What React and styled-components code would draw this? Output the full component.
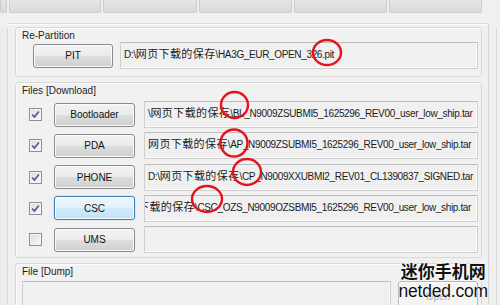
import styled, { createGlobalStyle, css } from "styled-components";

const GlobalStyle = createGlobalStyle`
  html, body { margin: 0; padding: 0; background: #f0f0f0; }
  body { font-family: "Liberation Sans", "Noto Sans CJK SC", sans-serif; }
`;

const Screen = styled.div`
  position: relative;
  width: 500px;
  height: 305px;
  overflow: hidden;
  display: flex;
  flex-direction: column;
  background: #f0f0f0;
  color: #1b1b1b;
  font-size: 10px;
`;

const TopBar = styled.div`
  display: flex;
  gap: 2px;
  height: 14px;
  flex: none;
`;

const TopCell = styled.div`
  width: ${(p) => p.$w}px;
  height: 13px;
  background: linear-gradient(#e6e6e6, #dadada);
  border: 1px solid #cdcdcd;
  border-top: none;
  border-radius: 0 0 2px 2px;
  box-sizing: border-box;
`;

const Body = styled.div`
  flex: 1;
  display: flex;
  min-height: 0;
`;

const LeftStrip = styled.div`
  width: 7px;
  flex: none;
  margin-top: 14px;
  border-right: 1px solid #d8d8d8;
  background: #ededed;
`;

const Page = styled.div`
  width: 481px;
  flex: none;
  margin-top: 9px;
  border-top: 1px solid #dcdcdc;
  border-right: 1px solid #d6d6d6;
  box-shadow: inset 0 1px 0 #fafafa;
  background: #f0f0f0;
  box-sizing: border-box;
  padding: 3px 6px 0 7px;
  display: flex;
  flex-direction: column;
  gap: 5px;
`;

const RightStrip = styled.div`
  flex: 1;
  margin-top: 14px;
  display: flex;
  justify-content: flex-end;
  padding-right: 3px;
  & > div {
    width: 1px;
    background: #d9d9d9;
  }
`;

const Group = styled.div`
  border: 1px solid #d9d9d9;
  border-radius: 3px;
  box-shadow: inset 1px 1px 0 #fbfbfb;
  background: #f1f1f1;
  padding: 2px 3px ${(p) => p.$pb}px 0;
  display: flex;
  flex-direction: column;
  flex: ${(p) => (p.$grow ? 1 : "none")};
`;

const GroupLabel = styled.div`
  padding-left: 6px;
  height: 12px;
  line-height: 12px;
  font-size: 10px;
  color: #1e1e1e;
`;

const Rows = styled.div`
  display: flex;
  flex-direction: column;
  gap: 4.25px;
  margin-top: ${(p) => p.$mt}px;
`;

const Row = styled.div`
  display: flex;
  align-items: center;
  height: 27px;
  padding-left: ${(p) => p.$pl}px;
  gap: ${(p) => p.$gap}px;
`;

const Check = styled.div`
  width: 13px;
  height: 13px;
  box-sizing: border-box;
  border: 1px solid #8f8f8f;
  background: linear-gradient(135deg, #dcdcdc, #f8f8f8);
  box-shadow: inset 0 0 0 1px #f4f4f4;
  display: flex;
  align-items: center;
  justify-content: center;
  margin-right: 12px;
  flex: none;
`;

const Button = styled.div`
  width: ${(p) => p.$w}px;
  height: ${(p) => p.$h || 24}px;
  flex: none;
  box-sizing: border-box;
  border: 1px solid #8a8a8a;
  border-radius: 3px;
  display: flex;
  align-items: center;
  justify-content: center;
  font-size: 10px;
  color: #111;
  box-shadow: inset 0 0 0 1px #fbfbfb;
  background: linear-gradient(#f3f3f3 0%, #ebebeb 48%, #dddddd 52%, #cfcfcf 100%);
  ${(p) =>
    p.$focus &&
    css`
      border-color: #3c7fb1;
      box-shadow: inset 0 0 0 1px #f7fcff, 0 0 2px #a8d6f2;
      background: linear-gradient(#eef7fd 0%, #e2f2fb 48%, #d0eaf9 52%, #c3e3f6 100%);
    `}
  ${(p) =>
    p.$disabled &&
    css`
      color: #a8a8a8;
      border-color: #b5b5b5;
      background: #f4f4f4;
    `}
`;

const Spacer = styled.div`
  width: ${(p) => p.$w}px;
  flex: none;
`;

const Field = styled.div`
  flex: 1;
  height: ${(p) => p.$h || 27}px;
  align-self: ${(p) => (p.$top ? "flex-start" : "center")};
  box-sizing: border-box;
  border: 1px solid #cfcfcf;
  border-top-color: #bdbdbd;
  box-shadow: inset -1px -1px 0 #fbfbfb;
  background: #f0f0f0;
  padding: 0 0 5px 3px;
  display: flex;
  align-items: center;
  overflow: hidden;
  white-space: nowrap;
  font-size: 10px;
  letter-spacing: -0.35px;
  color: #1c1c1c;
  min-width: 0;
`;

const FieldText = styled.span`
  display: block;
  margin-left: ${(p) => p.$shift || 0}px;
`;

const Cjk = styled.span`
  font-family: "Noto Sans CJK SC", sans-serif;
  font-size: 11px;
  letter-spacing: 0.4px;
`;

const DumpRow = styled.div`
  display: flex;
  gap: 7px;
  padding-left: 6px;
  margin-top: 3px;
  height: 30px;
`;

const Watermark = styled.div`
  position: absolute;
  right: 12px;
  bottom: 3px;
  display: flex;
  flex-direction: column;
  align-items: center;
  color: #111;
  text-shadow: 0 0 2px #fff, 0 0 2px #fff;
  pointer-events: none;
`;

const WmCn = styled.div`
  font-family: "Noto Sans CJK SC", sans-serif;
  font-size: 17px;
  font-weight: 700;
  line-height: 20px;
`;

const WmEn = styled.div`
  font-family: "Liberation Sans", sans-serif;
  font-size: 17.5px;
  line-height: 21px;
  letter-spacing: -0.2px;
`;

const Marks = styled.svg`
  position: absolute;
  left: 0;
  top: 0;
  pointer-events: none;
`;

const CheckMark = () => (
  <svg width="9" height="9" viewBox="0 0 9 9">
    <path d="M1.2 4.6 L3.5 7 L7.8 1.4" fill="none" stroke="#4b5f8f" strokeWidth="1.7" />
  </svg>
);

// CJK parts of a path get their own font size, as in the original control
const PathText = ({ text, shift }) => (
  <FieldText $shift={shift}>
    {text.split(/([\u4e00-\u9fff]+)/).map((part, i) =>
      /[\u4e00-\u9fff]/.test(part) ? <Cjk key={i}>{part}</Cjk> : part
    )}
  </FieldText>
);

const files = [
  { name: "Bootloader", checked: true, text: "\\网页下载的保存\\BL_N9009ZSUBMI5_1625296_REV00_user_low_ship.tar" },
  { name: "PDA", checked: true, text: "网页下载的保存\\AP_N9009ZSUBMI5_1625296_REV00_user_low_ship.tar" },
  { name: "PHONE", checked: true, text: "D:\\网页下载的保存\\CP_N9009XXUBMI2_REV01_CL1390837_SIGNED.tar" },
  { name: "CSC", checked: true, focus: true, shift: -10, text: "下载的保存\\CSC_OZS_N9009OZSBMI5_1625296_REV00_user_low_ship.tar" },
  { name: "UMS", checked: false, text: "" },
];

const circles = [
  { cx: 327, cy: 52.5, rx: 14, ry: 12.5 },
  { cx: 234.5, cy: 105, rx: 13.5, ry: 13 },
  { cx: 234, cy: 143, rx: 13.5, ry: 13.5 },
  { cx: 247, cy: 172, rx: 14, ry: 13 },
  { cx: 207, cy: 199, rx: 15, ry: 13 },
];

const topCells = [7, 92, 94, 93, 93, 93];

const App = () => {
  return (
    <Screen>
      <GlobalStyle />
      <TopBar>
        {topCells.map((w, i) => (
          <TopCell key={i} $w={w} />
        ))}
      </TopBar>
      <Body>
        <LeftStrip />
        <Page>
          <Group $pb={7}>
            <GroupLabel>Re-Partition</GroupLabel>
            <Rows $mt={0}>
              <Row $pl={17} $gap={7}>
                <Button $w={80}>PIT</Button>
                <Field>
                  <PathText text="D:\网页下载的保存\HA3G_EUR_OPEN_326.pit" />
                </Field>
              </Row>
            </Rows>
          </Group>
          <Group $pb={4}>
            <GroupLabel>Files [Download]</GroupLabel>
            <Rows $mt={4}>
              {files.map((f) => (
                <Row key={f.name} $pl={13} $gap={0}>
                  <Check>{f.checked && <CheckMark />}</Check>
                  <Button $w={81} $focus={f.focus}>{f.name}</Button>
                  <Spacer $w={9} />
                  <Field>
                    <PathText text={f.text} shift={f.shift} />
                  </Field>
                </Row>
              ))}
            </Rows>
          </Group>
          <Group $pb={0} $grow>
            <GroupLabel>File [Dump]</GroupLabel>
            <DumpRow>
              <Field $h={30} $top />
              <Button $w={80} $h={30} $disabled>Open</Button>
            </DumpRow>
          </Group>
        </Page>
        <RightStrip>
          <div />
        </RightStrip>
      </Body>
      <Marks width="500" height="305">
        {circles.map((c, i) => (
          <ellipse key={i} cx={c.cx} cy={c.cy} rx={c.rx} ry={c.ry} fill="none" stroke="#e4131c" strokeWidth="2.4" />
        ))}
      </Marks>
      <Watermark>
        <WmCn>迷你手机网</WmCn>
        <WmEn>netded.com</WmEn>
      </Watermark>
    </Screen>
  );
};

export default App;
